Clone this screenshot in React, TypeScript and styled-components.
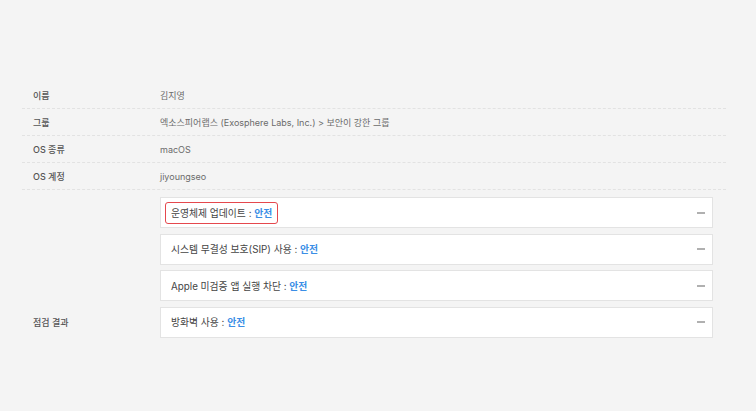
import styled, { createGlobalStyle } from "styled-components";

const GlobalStyle = createGlobalStyle`
  html, body {
    margin: 0;
    padding: 0;
    background: #f4f4f4;
  }
  body {
    font-family: "Inter", "Noto Sans CJK KR", sans-serif;
    -webkit-font-smoothing: antialiased;
  }
`;

const Page = styled.div`
  width: 756px;
  height: 411px;
  box-sizing: border-box;
  padding: 82px 30px 0 22px;
`;

const Table = styled.div`
  display: flex;
  flex-direction: column;
`;

const Row = styled.div`
  display: flex;
  align-items: center;
  height: 27px;
  border-bottom: 1px dashed #e2e2e2;
  box-sizing: border-box;
`;

const Label = styled.div`
  width: 138px;
  flex-shrink: 0;
  box-sizing: border-box;
  padding-left: 11px;
  font-size: 9px;
  font-weight: 500;
  color: #555;
`;

const Value = styled.div`
  font-size: 9px;
  color: #6b6b6b;
`;

const CheckRow = styled.div`
  display: flex;
  align-items: flex-end;
  padding: 7px 13px 0 0;
`;

const CheckLabel = styled(Label)`
  line-height: 31px;
`;

const CardList = styled.div`
  flex: 1;
  display: flex;
  flex-direction: column;
  gap: 5.5px;
`;

const Card = styled.div`
  height: 31px;
  box-sizing: border-box;
  display: flex;
  align-items: center;
  justify-content: space-between;
  padding: 0 7px 0 4px;
  background: #fff;
  border: 1px solid #e3e3e3;
`;

const CardTitle = styled.span<{ $highlight?: boolean }>`
  display: inline-flex;
  align-items: center;
  height: 20px;
  padding: 0 5px;
  border: 1px solid ${(p) => (p.$highlight ? "#e5484d" : "transparent")};
  border-radius: 3px;
  font-size: 9.8px;
  color: #444;
  white-space: pre;
`;

const Status = styled.b`
  color: #3a8ee6;
  font-weight: 700;
`;

const Collapse = styled.span`
  width: 8px;
  height: 2px;
  background: #b0b0b0;
`;

const info = [
  { label: "이름", value: "김지영" },
  { label: "그룹", value: "엑소스피어랩스 (Exosphere Labs, Inc.) > 보안이 강한 그룹" },
  { label: "OS 종류", value: "macOS" },
  { label: "OS 계정", value: "jiyoungseo" },
];

const checks = [
  { name: "운영체제 업데이트", highlight: true },
  { name: "시스템 무결성 보호(SIP) 사용" },
  { name: "Apple 미검증 앱 실행 차단" },
  { name: "방화벽 사용" },
];

export default function App() {
  return (
    <>
      <GlobalStyle />
      <Page>
        <Table>
          {info.map((r) => (
            <Row key={r.label}>
              <Label>{r.label}</Label>
              <Value>{r.value}</Value>
            </Row>
          ))}
          <CheckRow>
            <CheckLabel>점검 결과</CheckLabel>
            <CardList>
              {checks.map((c) => (
                <Card key={c.name}>
                  <CardTitle $highlight={c.highlight}>
                    {c.name} : <Status>안전</Status>
                  </CardTitle>
                  <Collapse />
                </Card>
              ))}
            </CardList>
          </CheckRow>
        </Table>
      </Page>
    </>
  );
}
